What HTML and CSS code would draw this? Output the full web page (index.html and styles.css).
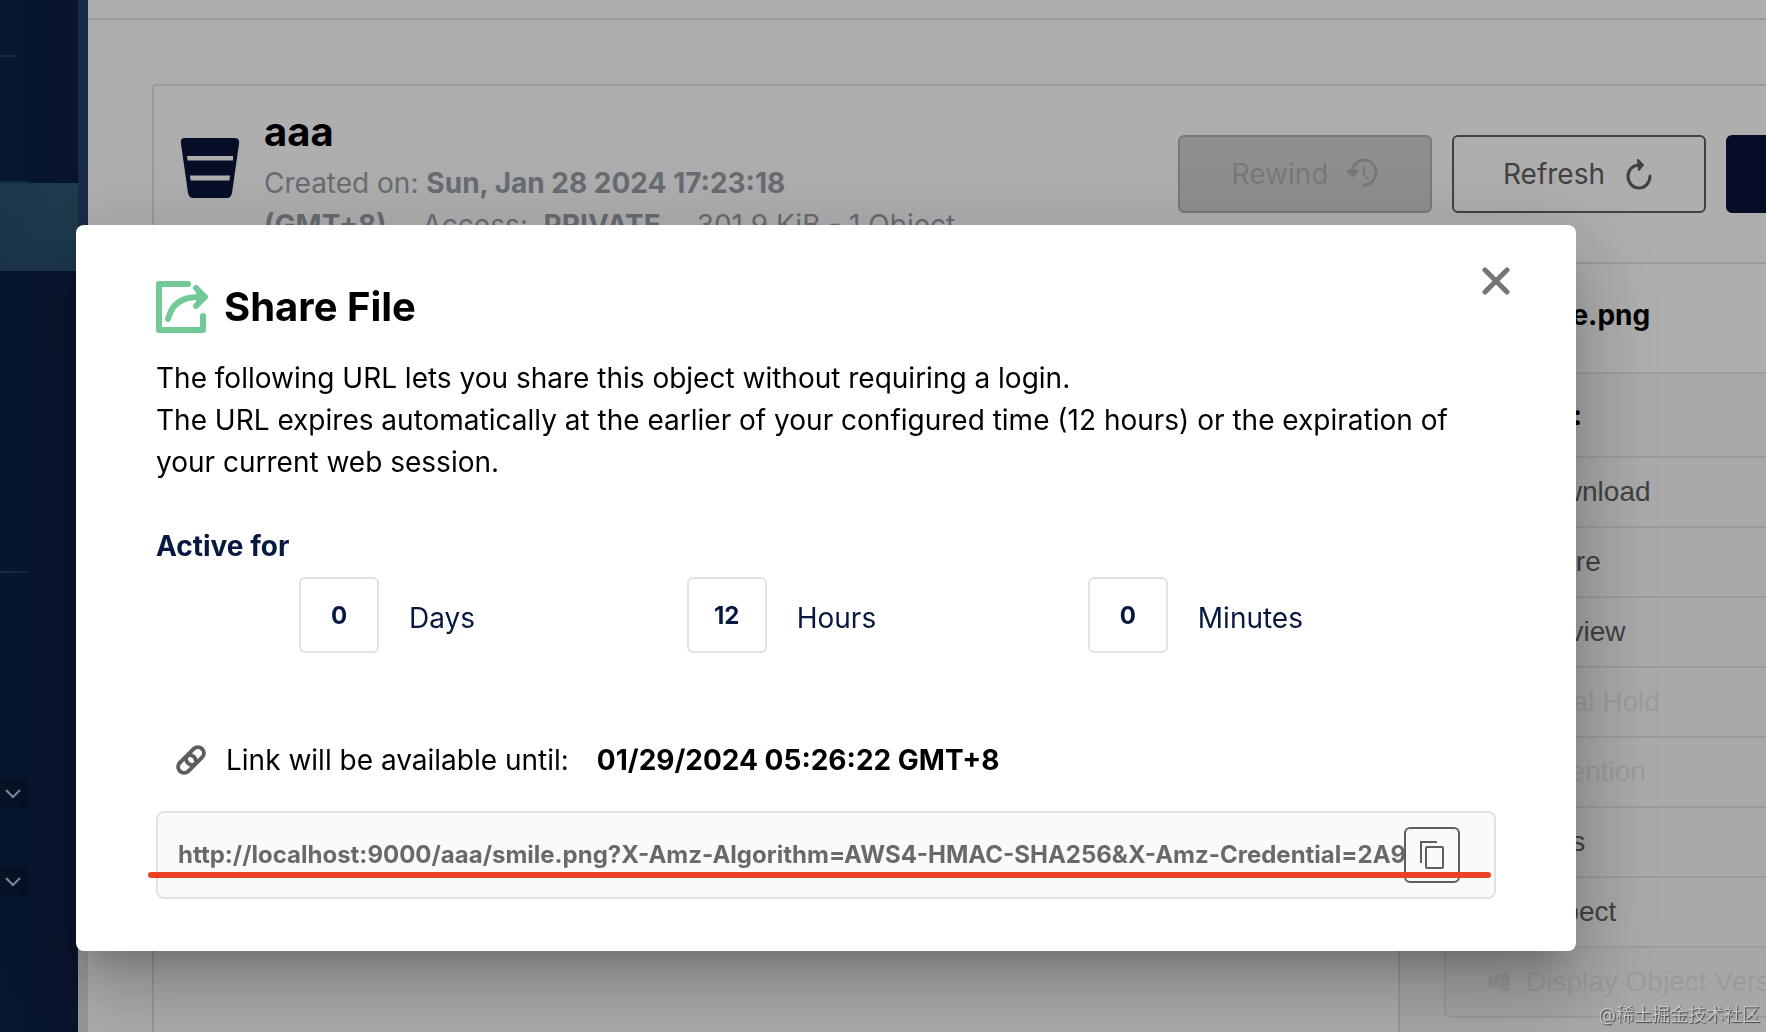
FILE: index.html
```html
<!DOCTYPE html>
<html lang="en">
<head>
    <meta charset="UTF-8">
    <meta name="viewport" content="width=device-width, initial-scale=1.0">
    <title>Share File</title>
    <link rel="stylesheet" href="styles.css">
</head>
<body>

    <div class="app">
        <nav class="sidebar">
            <div class="divider divider-short"></div>
            <div class="divider divider-menu"></div>
            <a href="#" class="menu-active" aria-label="Object Browser"></a>
            <div class="divider divider-section"></div>
            <button class="expand-btn expand-first" aria-label="Expand">
                <svg width="16" height="10" viewBox="0 0 16 10"><path d="M1 1l7 7 7-7"/></svg>
            </button>
            <button class="expand-btn" aria-label="Expand">
                <svg width="16" height="10" viewBox="0 0 16 10"><path d="M1 1l7 7 7-7"/></svg>
            </button>
        </nav>
        <div class="sidebar-edge"></div>

        <main class="main">
            <div class="top-bar"></div>
            <div class="browser">
                <div class="bucket-header">
                    <svg class="bucket-icon" width="60" height="60" viewBox="0 0 60 60">
                        <path d="M4 0H55Q60 0 59 6L52 55Q51 60 47 60H13Q9 60 8 55L1 6Q0 0 4 0Z"/>
                        <path class="bucket-line" d="M7 18H53V22.500H7.600ZM10 37.500H50L49.400 42.500H10.600Z"/>
                    </svg>
                    <div class="bucket-info">
                        <h1>aaa</h1>
                        <p>
                            Created on: <strong>Sun, Jan 28 2024 17:23:18</strong><br>
                            <strong class="info-item">(GMT+8)</strong>
                            <span class="info-item">Access: &nbsp;<strong>PRIVATE</strong></span>
                            <span>301.9 KiB - 1 Object</span>
                        </p>
                    </div>
                    <div class="bucket-actions">
                        <button class="action-btn" disabled>
                            Rewind
                            <svg width="32" height="32" viewBox="0 0 32 32" fill="none" stroke="currentColor" stroke-width="3" stroke-linecap="round" stroke-linejoin="round">
                                <path d="M6 15C6 8 11 2 18 2C25 2 30 8 30 14C30 21 25 27 18 27"/>
                                <path d="M2 13l4.500 5 5-5z" fill="currentColor"/>
                                <path d="M18 9v7l4 5" stroke-width="2"/>
                            </svg>
                        </button>
                        <button class="action-btn">
                            Refresh
                            <svg width="32" height="32" viewBox="0 0 32 32" fill="none" stroke="currentColor" stroke-width="3" stroke-linecap="round" stroke-linejoin="round">
                                <path d="M18 7H16C10 7 5 12 5 18C5 25 10 30 16 30C22 30 27 25 27 18"/>
                                <path d="M15 2l5 5-4 5z" fill="currentColor" stroke-width="2"/>
                            </svg>
                        </button>
                        <button class="action-btn upload-btn" aria-label="Upload"></button>
                    </div>
                </div>

                <div class="browser-body">
                    <div class="objects"></div>
                    <aside class="details">
                        <h2>smile.png</h2>
                        <div class="details-body">
                            <h3>Actions:</h3>
                            <div class="details-actions">
                                <button>Download</button>
                                <button>Share</button>
                                <button>Preview</button>
                                <button disabled>Legal Hold</button>
                                <button disabled>Retention</button>
                                <button>Tags</button>
                                <button>Inspect</button>
                                <button class="versions-btn" disabled>
                                    <svg width="22" height="18" viewBox="0 0 22 18" fill="currentColor"><path d="M0 4h5v10H0zM6 2h5v14H6zM12 0h10v18H12z"/></svg>
                                    Display Object Versions
                                </button>
                            </div>
                        </div>
                    </aside>
                </div>
            </div>
        </main>
    </div>

    <div class="overlay">
        <div class="modal" role="dialog" aria-labelledby="modalTitle">
            <div class="modal-title">
                <svg width="52" height="52" viewBox="0 0 52 52" fill="none" stroke="#72c997" stroke-width="6" stroke-linecap="round" stroke-linejoin="round">
                    <path d="M32 3H3V49H47V35"/>
                    <path d="M12 38C16 24 24 16 43 16"/>
                    <path d="M40 7l9 9-9 9"/>
                    <path d="M41 10l7 6-7 6z" fill="#72c997" stroke-width="2"/>
                </svg>
                <h2 id="modalTitle">Share File</h2>
            </div>
            <button class="close-btn" aria-label="Close">
                <svg width="28" height="28" viewBox="0 0 28 28"><path d="M3 3l22 22M25 3L3 25"/></svg>
            </button>

            <p class="description">
                The following URL lets you share this object without requiring a login.<br>
                The URL expires automatically at the earlier of your configured time (12 hours) or the expiration of your current web session.
            </p>

            <h3 class="active-for">Active for</h3>
            <div class="duration">
                <div class="duration-item">
                    <input type="number" id="days" value="0">
                    <label for="days">Days</label>
                </div>
                <div class="duration-item">
                    <input type="number" id="hours" value="12">
                    <label for="hours">Hours</label>
                </div>
                <div class="duration-item">
                    <input type="number" id="minutes" value="0">
                    <label for="minutes">Minutes</label>
                </div>
            </div>

            <div class="available">
                <svg width="30" height="30" viewBox="0 0 30 30" fill="none" stroke="#5e5e5e" stroke-width="4">
                    <rect x="-10" y="-6" width="20" height="12" rx="6" transform="translate(19 11) rotate(-45)"/>
                    <rect x="-10" y="-6" width="20" height="12" rx="6" transform="translate(11 19) rotate(-45)"/>
                </svg>
                <label for="shareUrl">Link will be available until:</label>
                <strong>01/29/2024 05:26:22 GMT+8</strong>
            </div>

            <div class="url-box">
                <input type="text" id="shareUrl" readonly value="http://localhost:9000/aaa/smile.png?X-Amz-Algorithm=AWS4-HMAC-SHA256&amp;X-Amz-Credential=2A9">
                <button class="copy-btn" aria-label="Copy">
                    <svg width="24" height="28" viewBox="0 0 24 28" fill="none" stroke="#5e5e5e" stroke-width="2">
                        <path d="M1 22V1H17"/>
                        <rect x="6" y="6" width="17" height="21" rx="1"/>
                    </svg>
                </button>
                <span class="marker"></span>
            </div>
        </div>
    </div>

    <div class="watermark">@稀土掘金技术社区</div>

</body>
</html>
```

FILE: styles.css
```css
* {
    box-sizing: border-box;
}
body {
    margin: 0;
    height: 100vh;
    overflow: hidden;
    font-family: Inter, "Noto Sans CJK SC", sans-serif;
    font-size: 28px;
    line-height: 42px;
    color: #000;
    background-color: #fbfafa;
}
h1, h2, h3, p {
    margin: 0;
}
button, input {
    font-family: inherit;
    font-size: inherit;
    line-height: inherit;
}
button {
    cursor: pointer;
}

/* The page runs past the right edge of the window */
.app {
    display: flex;
    width: calc(100% + 216px);
    height: 100%;
}
.sidebar {
    width: 78px;
    display: flex;
    flex-direction: column;
    align-items: flex-start;
    background: linear-gradient(90deg, #0a2242, #0e1d40);
}
.sidebar-edge {
    width: 10px;
    background: linear-gradient(#223f67 80%, #dcdcdc 80%);
}
.divider {
    width: 28px;
    height: 2px;
    background-color: #1e3d5e;
}
.divider-short {
    width: 18px;
    margin-top: 55px;
}
.divider-menu {
    margin-top: 124px;
}
.divider-section {
    margin-top: 300px;
}
.menu-active {
    width: 100%;
    height: 88px;
    background: linear-gradient(60deg, #264b66, #2b566f);
}
.expand-btn {
    width: 28px;
    height: 30px;
    margin-top: 58px;
    padding: 2px 0 0 5px;
    border: none;
    border-radius: 0 4px 4px 0;
    background-color: #0a1936;
    display: flex;
    align-items: center;
}
.expand-btn svg {
    fill: none;
    stroke: #bcc5d4;
    stroke-width: 2;
}
.expand-first {
    margin-top: 205px;
}

.main {
    flex: 1;
    display: flex;
    flex-direction: column;
}
.top-bar {
    height: 20px;
    border-bottom: 2px solid #dedede;
}
.browser {
    flex: 1;
    display: flex;
    flex-direction: column;
    margin: 64px 0 0 64px;
    border: 2px solid #dedede;
    border-bottom: none;
    border-radius: 4px 4px 0 0;
}
.bucket-header {
    display: flex;
    align-items: center;
    height: 178px;
    padding-left: 26px;
    border-bottom: 2px solid #dedede;
}
.bucket-icon {
    margin-bottom: 12px;
    fill: #0a1539;
}
.bucket-line {
    fill: #fbfafa;
}
.bucket-info {
    flex: 1;
    padding: 4px 0 0 24px;
    color: #959ca4;
}
.bucket-info h1 {
    margin-bottom: 5px;
    font-size: 40px;
    line-height: 50px;
    color: #000;
}
.info-item {
    margin-right: 28px;
}
.bucket-actions {
    display: flex;
    gap: 20px;
}
.action-btn {
    display: flex;
    align-items: center;
    justify-content: center;
    gap: 18px;
    width: 254px;
    height: 78px;
    border: 2px solid #5e5e5e;
    border-radius: 6px;
    background-color: transparent;
    color: #5e5e5e;
}
.action-btn:disabled {
    background-color: #cbcecd;
    border-color: #acaeae;
    color: #acaeae;
}
.upload-btn {
    border-color: #0a1539;
    background-color: #0a1539;
}

.browser-body {
    flex: 1;
    display: grid;
    grid-template-columns: 1fr 582px;
}
.details {
    border-left: 2px solid #dedede;
    font-family: "Liberation Sans", Arial, sans-serif;
}
.details h2 {
    height: 110px;
    padding: 30px 0 0 115px;
    border-bottom: 2px solid #e4e4e4;
    font-family: Inter, sans-serif;
    font-size: 28px;
}
.details-body {
    height: 100%;
    padding-left: 44px;
    background-color: #f3f3f3;
}
.details h3 {
    height: 82px;
    padding: 20px 0 0 24px;
    font-family: Inter, sans-serif;
    font-size: 28px;
}
.details-actions {
    border: 2px solid #e0e0e0;
    border-bottom: none;
    border-radius: 6px;
}
.details-actions button {
    display: flex;
    align-items: center;
    width: 100%;
    height: 70px;
    padding: 0 0 0 80px;
    border: none;
    border-bottom: 2px solid #e0e0e0;
    background-color: transparent;
    color: #5e5e5e;
}
.details-actions button:disabled {
    color: #dfdfdf;
}
.details-actions .versions-btn {
    gap: 16px;
    padding-left: 42px;
    border-radius: 0 0 6px 6px;
    background-color: #efefef;
}

.overlay {
    position: fixed;
    inset: 0;
    display: flex;
    align-items: flex-start;
    padding: 225px 190px 0 76px;
    background-color: rgba(0, 0, 0, 0.3);
}
.modal {
    position: relative;
    flex: 1;
    padding: 56px 80px 52px;
    border-radius: 8px;
    background-color: #fff;
    box-shadow: 0 22px 30px -14px rgba(0, 0, 0, 0.2),
                0 48px 76px 6px rgba(0, 0, 0, 0.14),
                0 18px 92px 16px rgba(0, 0, 0, 0.12);
}
.modal-title {
    display: flex;
    align-items: center;
    gap: 16px;
    height: 52px;
    margin-bottom: 24px;
}
.modal-title h2 {
    font-size: 40px;
}
.close-btn {
    position: absolute;
    top: 42px;
    right: 66px;
    display: flex;
    padding: 0;
    border: none;
    background: none;
}
.close-btn svg {
    fill: none;
    stroke: #757575;
    stroke-width: 5;
    stroke-linecap: round;
}
.active-for {
    margin: 42px 0 10px;
    font-size: 28px;
    color: #07193e;
}
.duration {
    display: flex;
    justify-content: space-between;
    padding: 0 193px 0 143px;
    color: #07193e;
}
.duration-item {
    display: flex;
    align-items: center;
    gap: 30px;
}
.duration-item input {
    width: 80px;
    height: 76px;
    padding: 0;
    border: 2px solid #e2e2e2;
    border-radius: 6px;
    background-color: #fff;
    color: #07193e;
    font-size: 24px;
    font-weight: bold;
    text-align: center;
    appearance: textfield;
}
.duration-item input::-webkit-inner-spin-button {
    display: none;
}
.duration-item label {
    padding-top: 6px;
}
.available {
    display: flex;
    align-items: center;
    gap: 20px;
    margin: 86px 0 30px;
    padding-left: 20px;
}
.available strong {
    margin-left: 8px;
}
.url-box {
    position: relative;
    display: flex;
    align-items: center;
    height: 88px;
    padding: 0 34px 0 20px;
    border: 2px solid #e2e2e2;
    border-radius: 8px;
    background-color: #fafafa;
}
.url-box input {
    flex: 1;
    min-width: 0;
    padding: 0;
    border: none;
    outline: none;
    background: none;
    color: #696969;
    font-size: 24px;
    font-weight: bold;
}
.copy-btn {
    display: flex;
    align-items: center;
    justify-content: center;
    width: 56px;
    height: 56px;
    padding: 0;
    border: 2px solid #5e5e5e;
    border-radius: 6px;
    background-color: #fafafa;
}
/* Red underline drawn across the link */
.marker {
    position: absolute;
    top: 59px;
    left: -10px;
    right: 3px;
    height: 6px;
    border-radius: 3px;
    background-color: #eb4026;
}
.watermark {
    position: fixed;
    right: 6px;
    bottom: 4px;
    font-size: 18px;
    line-height: 26px;
    color: #c4c4c4;
    text-shadow: 1px 1px 1px #444;
}
```
